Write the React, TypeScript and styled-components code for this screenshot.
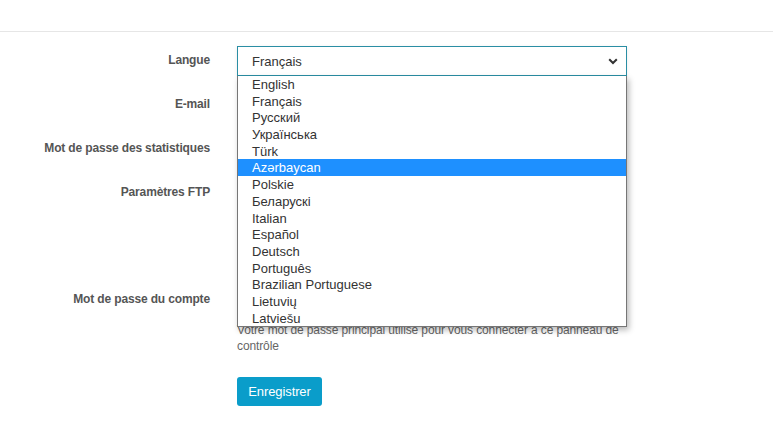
import React from "react";
import styled, { createGlobalStyle } from "styled-components";

const GlobalStyle = createGlobalStyle`
  html, body { margin: 0; padding: 0; background: #fff; }
  body { font-family: "Liberation Sans", Arial, sans-serif; }
  * { box-sizing: border-box; }
`;

const TopBar = styled.div`
  height: 32px;
  border-bottom: 1px solid #e6e6e6;
`;

const Form = styled.form`
  display: grid;
  grid-template-columns: 210px 390px;
  column-gap: 27px;
  row-gap: 14px;
  padding-top: 14px;
`;

const Label = styled.div`
  text-align: right;
  font-size: 12px;
  font-weight: bold;
  line-height: 16px;
  letter-spacing: -0.15px;
  color: #555;
  padding-top: 6px;
`;

const Field = styled.div`
  position: relative;
  display: flex;
  flex-direction: column;
`;

const SelectBox = styled.div`
  height: 30px;
  border: 1px solid #2a8ea4;
  box-shadow: 0 1px 4px rgba(0, 0, 0, 0.08);
  display: flex;
  align-items: center;
  justify-content: space-between;
  padding: 0 8px 0 14px;
  font-size: 13px;
  color: #333;
  background: #fff;
`;

const Input = styled.div<{ $gap?: number }>`
  height: 30px;
  border: 1px solid #ccc;
  background: #fff;
  margin-bottom: ${(p) => p.$gap ?? 0}px;
`;

const Help = styled.div<{ $top?: number }>`
  font-size: 12px;
  line-height: 16px;
  letter-spacing: -0.12px;
  color: #666;
  margin-top: ${(p) => p.$top ?? 0}px;
`;

const List = styled.ul`
  position: absolute;
  top: 100%;
  left: 0;
  width: 390px;
  margin: 0;
  padding: 0;
  list-style: none;
  background: #fff;
  border: 1px solid #767676;
  border-top: none;
  box-shadow: 2px 3px 6px rgba(0, 0, 0, 0.28);
  z-index: 10;
`;

const Option = styled.li<{ $active?: boolean }>`
  height: 16.7px;
  line-height: 17px;
  padding-left: 14px;
  font-size: 13px;
  color: ${(p) => (p.$active ? "#fff" : "#333")};
  background: ${(p) => (p.$active ? "#1e90ff" : "transparent")};
  white-space: nowrap;
`;

const Button = styled.button`
  width: 85px;
  height: 29px;
  margin-top: 9px;
  border: none;
  border-radius: 3px;
  background: #0a9dca;
  color: #fff;
  font-family: "Liberation Sans", Arial, sans-serif;
  font-size: 13px;
  letter-spacing: -0.1px;
  padding: 0;
`;

const Chevron = () => (
  <svg width="10" height="7" viewBox="0 0 10 7">
    <path d="M1.2 1.2 L5 5 L8.8 1.2" fill="none" stroke="#333" strokeWidth="2" />
  </svg>
);

const languages = [
  "English",
  "Français",
  "Русский",
  "Українська",
  "Türk",
  "Azərbaycan",
  "Polskie",
  "Беларускі",
  "Italian",
  "Español",
  "Deutsch",
  "Português",
  "Brazilian Portuguese",
  "Lietuvių",
  "Latviešu",
];

export default function App() {
  return (
    <>
      <GlobalStyle />
      <TopBar />
      <Form onSubmit={(e) => e.preventDefault()}>
        <Label>Langue</Label>
        <Field>
          <SelectBox>
            <span>Français</span>
            <Chevron />
          </SelectBox>
          <List>
            {languages.map((l) => (
              <Option key={l} $active={l === "Azərbaycan"}>
                {l}
              </Option>
            ))}
          </List>
        </Field>

        <Label>E-mail</Label>
        <Field>
          <Input />
        </Field>

        <Label>Mot de passe des statistiques</Label>
        <Field>
          <Input />
        </Field>

        <Label>Paramètres FTP</Label>
        <Field>
          <Input $gap={8} />
          <Input $gap={25} />
        </Field>

        <Label>Mot de passe du compte</Label>
        <Field>
          <Input />
          <Help $top={7}>
            Votre mot de passe principal utilisé pour vous connecter à ce panneau de contrôle
          </Help>
        </Field>

        <div />
        <Field>
          <Button type="submit">Enregistrer</Button>
        </Field>
      </Form>
    </>
  );
}
